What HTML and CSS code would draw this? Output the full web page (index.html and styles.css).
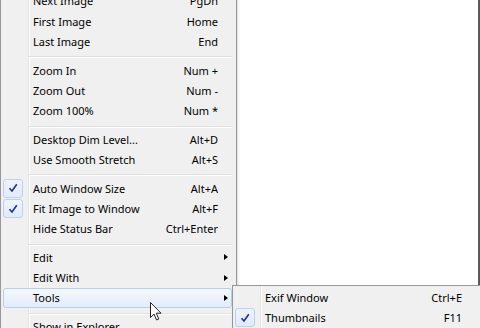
FILE: index.html
```html
<!DOCTYPE html>
<html lang="en">
  <head>
    <meta charset="UTF-8" />
    <meta name="viewport" content="width=device-width, initial-scale=1.0" />
    <title>Viewer Context Menu</title>
    <link rel="stylesheet" href="styles.css">
  </head>
  <body>
    <div class="screen">
      <!-- edge of the window behind the menu -->
      <div class="window-edge"></div>

      <div class="menu main-menu">
        <div class="item"><span class="mark"></span><span class="label">Next Image</span><span class="key">PgDn</span><span class="sub"></span></div>
        <div class="item"><span class="mark"></span><span class="label">First Image</span><span class="key">Home</span><span class="sub"></span></div>
        <div class="item"><span class="mark"></span><span class="label">Last Image</span><span class="key">End</span><span class="sub"></span></div>
        <div class="sep"></div>
        <div class="item"><span class="mark"></span><span class="label">Zoom In</span><span class="key">Num +</span><span class="sub"></span></div>
        <div class="item"><span class="mark"></span><span class="label">Zoom Out</span><span class="key">Num -</span><span class="sub"></span></div>
        <div class="item"><span class="mark"></span><span class="label">Zoom 100%</span><span class="key">Num *</span><span class="sub"></span></div>
        <div class="sep"></div>
        <div class="item"><span class="mark"></span><span class="label">Desktop Dim Level...</span><span class="key">Alt+D</span><span class="sub"></span></div>
        <div class="item"><span class="mark"></span><span class="label">Use Smooth Stretch</span><span class="key">Alt+S</span><span class="sub"></span></div>
        <div class="sep"></div>
        <div class="item">
          <span class="mark checked"><svg viewBox="0 0 10 10" width="10" height="10"><path d="M1.5 5.2 L4 8 L8.8 1.2" fill="none" stroke="#1b2fa6" stroke-width="1.6"/></svg></span>
          <span class="label">Auto Window Size</span><span class="key">Alt+A</span><span class="sub"></span>
        </div>
        <div class="item">
          <span class="mark checked"><svg viewBox="0 0 10 10" width="10" height="10"><path d="M1.5 5.2 L4 8 L8.8 1.2" fill="none" stroke="#1b2fa6" stroke-width="1.6"/></svg></span>
          <span class="label">Fit Image to Window</span><span class="key">Alt+F</span><span class="sub"></span>
        </div>
        <div class="item"><span class="mark"></span><span class="label">Hide Status Bar</span><span class="key">Ctrl+Enter</span><span class="sub"></span></div>
        <div class="sep"></div>
        <div class="item"><span class="mark"></span><span class="label">Edit</span><span class="key"></span><span class="sub"><i class="arrow"></i></span></div>
        <div class="item"><span class="mark"></span><span class="label">Edit With</span><span class="key"></span><span class="sub"><i class="arrow"></i></span></div>
        <div class="item hot"><span class="mark"></span><span class="label">Tools</span><span class="key"></span><span class="sub"><i class="arrow"></i></span></div>
        <div class="sep"></div>
        <div class="item"><span class="mark"></span><span class="label">Show in Explorer</span><span class="key"></span><span class="sub"></span></div>
      </div>

      <div class="menu tools-menu">
        <div class="item"><span class="mark"></span><span class="label">Exif Window</span><span class="key">Ctrl+E</span><span class="sub"></span></div>
        <div class="item">
          <span class="mark checked"><svg viewBox="0 0 10 10" width="10" height="10"><path d="M1.5 5.2 L4 8 L8.8 1.2" fill="none" stroke="#1b2fa6" stroke-width="1.6"/></svg></span>
          <span class="label">Thumbnails</span><span class="key">F11</span><span class="sub"></span>
        </div>
      </div>

      <svg class="cursor" viewBox="0 0 13 20" width="13" height="20">
        <path d="M0.5 0.5 L0.5 15.5 L4 12 L6.6 18 L8.8 17 L6.3 11.2 L11 11.2 Z" fill="#fff" stroke="#222" stroke-width="1" stroke-linejoin="round"/>
      </svg>
    </div>
  </body>
</html>
```

FILE: styles.css
```css
body {
  margin: 0;
  background: #fff;
  font-family: "Noto Sans", "Open Sans", sans-serif;
  font-size: 11px;
  color: #000;
  overflow: hidden;
}
.screen {
  position: relative;
  width: 480px;
  height: 328px;
  overflow: hidden;
  background: #fff;
}
.window-edge {
  position: absolute;
  left: 478px;
  top: 0;
  width: 2px;
  height: 285px;
  background: #5a5a5a;
}
.menu {
  position: absolute;
  background: #f0f0f0;
  border: 1px solid #979797;
  padding: 0 4px 2px 2px;
  box-shadow: 1px 1px 2px rgba(0, 0, 0, 0.15);
}
/* the gutter line behind the check marks */
.menu::before {
  content: "";
  position: absolute;
  top: 0;
  bottom: 0;
  left: 27px;
  width: 1px;
  background: #e2e3e3;
  border-right: 1px solid #fff;
}
.main-menu {
  left: 0;
  top: -10.3px;
  width: 229px;
}
.tools-menu {
  left: 232px;
  top: 285px;
  width: 241px;
  padding-top: 1px;
}
.item {
  position: relative;
  display: grid;
  grid-template-columns: 25px 1fr auto 13px;
  align-items: center;
  height: 20.4px;
  box-sizing: border-box;
  border: 1px solid transparent;
  border-radius: 3px;
  white-space: nowrap;
}
.item.hot {
  border-color: #b3cff0;
  background: linear-gradient(#f4f8fd, #e2ecf9);
}
.label {
  padding-left: 4px;
}
.mark {
  height: 100%;
}
.mark.checked {
  display: flex;
  align-items: center;
  justify-content: center;
  width: 20px;
  height: 19px;
  margin-left: -1px;
  box-sizing: border-box;
  border: 1px solid #b9d1ee;
  border-radius: 3px;
  background: linear-gradient(#eef3fb, #e3ebf7);
}
.sub {
  height: 100%;
  display: flex;
  align-items: center;
}
.arrow {
  margin-left: 6px;
  width: 0;
  height: 0;
  border-left: 4px solid #000;
  border-top: 3.5px solid transparent;
  border-bottom: 3.5px solid transparent;
}
.sep {
  position: relative;
  height: 1px;
  margin: 4.6px 0 1.4px 26px;
  background: #e0e0e0;
  border-bottom: 1px solid #fff;
}
.cursor {
  position: absolute;
  left: 150px;
  top: 302px;
}
```
